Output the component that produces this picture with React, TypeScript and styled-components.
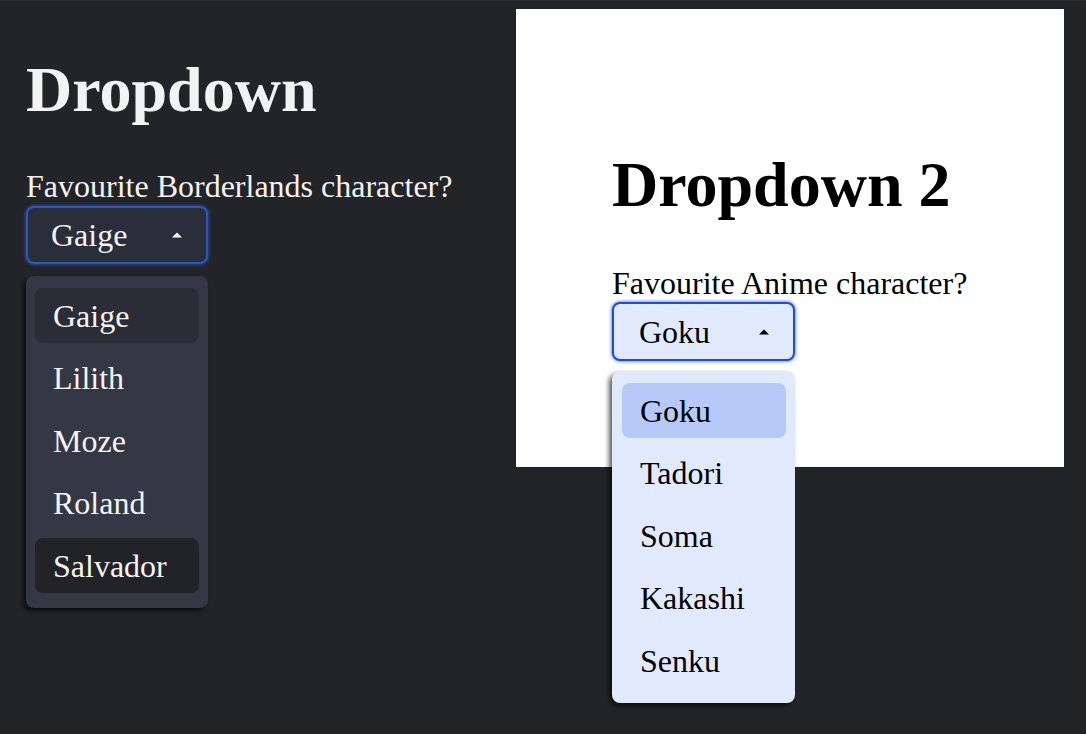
import React from "react";
import styled, { createGlobalStyle } from "styled-components";

const GlobalStyle = createGlobalStyle`
  html, body { margin: 0; padding: 0; }
  body {
    background: #232428;
    border-top: 1px solid #2c2d32;
    font-family: "Liberation Serif", "Times New Roman", serif;
  }
`;

type Tone = "dark" | "light";

const Page = styled.div`
  display: flex;
  align-items: flex-start;
  height: 733px;
`;

const LeftSection = styled.section`
  width: 516px;
  box-sizing: border-box;
  padding: 53px 0 0 26px;
  color: #f3f3f3;
`;

const RightPanel = styled.section`
  margin-top: 8px;
  width: 548px;
  height: 458px;
  box-sizing: border-box;
  padding: 140px 0 0 96px;
  background: #ffffff;
  color: #000000;
`;

const Title = styled.h1`
  margin: 0;
  font-size: 64px;
  line-height: 72px;
  font-weight: 700;
`;

const Label = styled.div<{ $gap: number }>`
  margin-top: ${(p) => p.$gap}px;
  font-size: 32px;
  line-height: 36px;
`;

const SelectWrap = styled.div<{ $gap: number }>`
  position: relative;
  margin-top: ${(p) => p.$gap}px;
  width: fit-content;
`;

const Trigger = styled.button<{ $tone: Tone; $w: number; $h: number; $pad: number }>`
  display: flex;
  align-items: center;
  justify-content: space-between;
  box-sizing: border-box;
  width: ${(p) => p.$w}px;
  height: ${(p) => p.$h}px;
  padding: 0 24px 0 ${(p) => p.$pad}px;
  border-radius: 8px;
  font-family: "Liberation Serif", "Times New Roman", serif;
  font-size: 32px;
  line-height: 36px;
  cursor: pointer;
  ${(p) =>
    p.$tone === "dark"
      ? `
    background: #2a2d3a;
    color: #f3f3f3;
    border: 2px solid #2f55bf;
    box-shadow: 0 0 3px 1px rgba(47, 85, 191, 0.7);
  `
      : `
    background: #e1eafd;
    color: #000000;
    border: 2px solid #1f4fcf;
    box-shadow: 0 0 3px 1px rgba(31, 79, 207, 0.6);
  `}
`;

const Caret = styled.svg`
  display: block;
  width: 10px;
  height: 6px;
`;

const Menu = styled.ul<{ $tone: Tone; $offset: number; $w: number; $side: number }>`
  position: absolute;
  left: 0;
  top: calc(100% + ${(p) => p.$offset}px);
  box-sizing: border-box;
  width: ${(p) => p.$w}px;
  margin: 0;
  padding: 12px 9px 15px ${(p) => p.$side}px;
  list-style: none;
  display: flex;
  flex-direction: column;
  gap: 7.5px;
  border-radius: 8px;
  background: ${(p) => (p.$tone === "dark" ? "#343845" : "#e1eafd")};
  box-shadow: -3px 3px 5px rgba(0, 0, 0, 0.65);
  z-index: 2;
`;

type ItemState = "selected" | "hover" | "none";

const Item = styled.li<{ $tone: Tone; $state: ItemState }>`
  display: flex;
  align-items: center;
  height: 55px;
  padding-left: 18px;
  border-radius: 8px;
  font-size: 32px;
  line-height: 36px;
  color: ${(p) => (p.$tone === "dark" ? "#f3f3f3" : "#000000")};
  background: ${(p) => {
    if (p.$state === "none") return "transparent";
    if (p.$tone === "dark") return p.$state === "selected" ? "#2a2d37" : "#222327";
    return "#b6c9f8";
  }};
`;

type DropdownProps = {
  tone: Tone;
  value: string;
  options: string[];
  hovered?: string;
  gap: number;
  width: number;
  height: number;
  menuOffset: number;
  pad: number;
  side: number;
};

function Dropdown({ tone, value, options, hovered, gap, width, height, menuOffset, pad, side }: DropdownProps) {
  const fill = tone === "dark" ? "#ffffff" : "#000000";
  return (
    <SelectWrap $gap={gap}>
      <Trigger $tone={tone} $w={width} $h={height} $pad={pad}>
        <span>{value}</span>
        <Caret viewBox="0 0 10 6">
          <path d="M5 0.5 L10 5.5 L0 5.5 Z" fill={fill} />
        </Caret>
      </Trigger>
      <Menu $tone={tone} $offset={menuOffset} $w={width} $side={side}>
        {options.map((o) => (
          <Item
            key={o}
            $tone={tone}
            $state={o === value ? "selected" : o === hovered ? "hover" : "none"}
          >
            {o}
          </Item>
        ))}
      </Menu>
    </SelectWrap>
  );
}

export default function App() {
  return (
    <>
      <GlobalStyle />
      <Page>
        <LeftSection>
          <Title>Dropdown</Title>
          <Label $gap={42}>Favourite Borderlands character?</Label>
          <Dropdown
            tone="dark"
            value="Gaige"
            options={["Gaige", "Lilith", "Moze", "Roland", "Salvador"]}
            hovered="Salvador"
            gap={2}
            width={182}
            height={58}
            menuOffset={12}
            pad={23}
            side={9}
          />
        </LeftSection>
        <RightPanel>
          <Title>Dropdown 2</Title>
          <Label $gap={44}>Favourite Anime character?</Label>
          <Dropdown
            tone="light"
            value="Goku"
            options={["Goku", "Tadori", "Soma", "Kakashi", "Senku"]}
            gap={1}
            width={183}
            height={59}
            menuOffset={10}
            pad={25}
            side={10}
          />
        </RightPanel>
      </Page>
    </>
  );
}
